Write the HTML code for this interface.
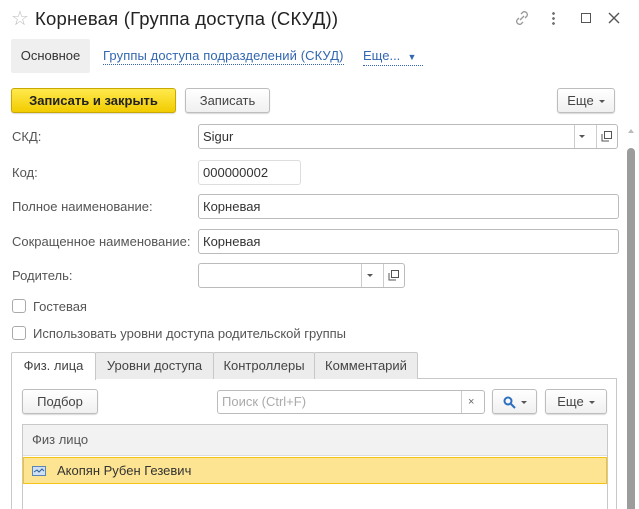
<!DOCTYPE html>
<html><head><meta charset="utf-8"><style>
*{box-sizing:border-box;margin:0;padding:0}
html,body{width:639px;height:509px;overflow:hidden}
body{background:#fff;font-family:"Liberation Sans",Arial,sans-serif;font-size:13px;color:#333;position:relative}
.a{position:absolute;white-space:nowrap}
.inp{position:absolute;border:1px solid #bbb;border-radius:3px;background:#fff;height:25px;padding-left:4px;line-height:23px;color:#333}
.btn{position:absolute;border:1px solid #bdbdbd;border-radius:3px;background:linear-gradient(#fff,#f0f0f0);height:25px;line-height:23px;text-align:center;box-shadow:0 1px 1px rgba(0,0,0,.15);color:#444}
.sep{position:absolute;top:0;bottom:0;width:1px;background:#ccc}
.tri{display:inline-block;width:0;height:0;border-left:3px solid transparent;border-right:3px solid transparent;border-top:3px solid #555;vertical-align:middle;margin-left:5px}
.cb{position:absolute;width:14px;height:14px;border:1px solid #aaa;border-radius:3px;background:#fff}
.lbl{position:absolute;color:#555;white-space:nowrap}
.tab{position:absolute;top:352px;height:27px;border:1px solid #c8c8c8;border-bottom:none;background:#ececec;line-height:25px;text-align:center;color:#444;border-radius:2px 2px 0 0}
</style></head><body>
<div class="a" style="left:11px;top:6px;font-size:20px;color:#bbb">☆</div>
<div class="a" style="left:35px;top:8px;font-size:18.5px;color:#222;letter-spacing:0.2px">Корневая (Группа доступа (СКУД))</div>
<svg class="a" style="left:513px;top:9px" width="18" height="18" viewBox="0 0 18 18" fill="none" stroke="#999" stroke-width="1.3"><path d="M8 5l2-2a3 3 0 014 4l-2 2M10 13l-2 2a3 3 0 01-4-4l2-2M7 11l4-4"/></svg>
<div class="a" style="left:552px;top:11px;width:3px;height:14px;background:radial-gradient(circle,#777 1.3px,transparent 1.5px) 0 0/3px 5px"></div>
<div class="a" style="left:581px;top:13px;width:10px;height:10px;border:1.5px solid #555"></div>
<svg class="a" style="left:608px;top:12px" width="12" height="12" stroke="#555" stroke-width="1.4"><path d="M1 1l10 10M11 1L1 11"/></svg>

<div class="a" style="left:11px;top:39px;width:79px;height:34px;background:#efefef;border-radius:2px;line-height:34px;text-align:center;color:#333">Основное</div>
<div class="a" style="left:103px;top:48px;color:#3367b0;border-bottom:1px dotted #3367b0;line-height:16px;letter-spacing:0.1px">Группы доступа подразделений (СКУД)</div>
<div class="a" style="left:363px;top:48px;color:#3367b0;border-bottom:1px dotted #3367b0;line-height:16px;width:60px">Еще...&nbsp;&nbsp;<span style="font-size:9px">▼</span></div>

<div class="btn" style="left:11px;top:88px;width:165px;background:linear-gradient(#ffe94d,#f2cc00);border-color:#c9a800;color:#222;font-weight:bold">Записать и закрыть</div>
<div class="btn" style="left:185px;top:88px;width:85px">Записать</div>
<div class="btn" style="left:557px;top:88px;width:58px">Еще<span class="tri"></span></div>

<div class="lbl" style="left:12px;top:129px">СКД:</div>
<div class="inp" style="left:198px;top:124px;width:420px">Sigur<div class="sep" style="left:375px"></div><span class="tri" style="position:absolute;left:380px;top:10px;margin:0"></span><div class="sep" style="left:397px"></div><svg style="position:absolute;left:402px;top:6px" width="11" height="11" fill="none" stroke="#555"><rect x="3.5" y="0.5" width="7" height="7"/><path d="M1 3v7h7"/></svg></div>
<div class="lbl" style="left:12px;top:165px">Код:</div>
<div class="inp" style="left:198px;top:160px;width:103px;border-color:#ddd">000000002</div>
<div class="lbl" style="left:12px;top:199px">Полное наименование:</div>
<div class="inp" style="left:198px;top:194px;width:421px">Корневая</div>
<div class="lbl" style="left:12px;top:234px">Сокращенное наименование:</div>
<div class="inp" style="left:198px;top:229px;width:421px">Корневая</div>
<div class="lbl" style="left:12px;top:268px">Родитель:</div>
<div class="inp" style="left:198px;top:263px;width:207px"><div class="sep" style="left:162px"></div><span class="tri" style="position:absolute;left:168px;top:10px;margin:0"></span><div class="sep" style="left:184px"></div><svg style="position:absolute;left:189px;top:6px" width="11" height="11" fill="none" stroke="#555"><rect x="3.5" y="0.5" width="7" height="7"/><path d="M1 3v7h7"/></svg></div>
<div class="cb" style="left:12px;top:299px"></div><div class="lbl" style="left:33px;top:299px">Гостевая</div>
<div class="cb" style="left:12px;top:326px"></div><div class="lbl" style="left:33px;top:326px">Использовать уровни доступа родительской группы</div>

<div class="a" style="left:11px;top:378px;width:606px;height:140px;border:1px solid #c8c8c8"></div>
<div class="tab" style="left:11px;width:85px;background:#fff;height:28px;z-index:2">Физ. лица</div>
<div class="tab" style="left:95px;width:119px">Уровни доступа</div>
<div class="tab" style="left:213px;width:102px">Контроллеры</div>
<div class="tab" style="left:314px;width:104px">Комментарий</div>

<div class="btn" style="left:22px;top:389px;width:76px">Подбор</div>
<div class="inp" style="left:217px;top:390px;width:268px;height:24px;line-height:22px;color:#aaa">Поиск (Ctrl+F)<div class="sep" style="left:243px"></div><span style="position:absolute;left:250px;color:#666;font-size:11px">×</span></div>
<div class="btn" style="left:492px;top:389px;width:45px"><svg width="13" height="13" style="vertical-align:middle" fill="none" stroke="#2c6fbf" stroke-width="2"><circle cx="5" cy="5" r="3.5"/><path d="M8 8l4 4"/></svg><span class="tri"></span></div>
<div class="btn" style="left:545px;top:389px;width:62px">Еще<span class="tri"></span></div>

<div class="a" style="left:22px;top:424px;width:586px;height:90px;border:1px solid #c8c8c8"></div>
<div class="a" style="left:23px;top:425px;width:584px;height:31px;background:#f2f2f2;border-bottom:1px solid #ddd;line-height:30px;padding-left:9px;color:#555">Физ лицо</div>
<div class="a" style="left:23px;top:457px;width:584px;height:27px;background:#fde492;border:1px solid #f4c315;line-height:25px;padding-left:33px;color:#333">Акопян Рубен Гезевич</div>
<svg class="a" style="left:32px;top:466px" width="14" height="10"><rect x="0.5" y="0.5" width="13" height="9" fill="#cfe0f2" stroke="#5a86b5"/><path d="M2 6l3-2 2 2 3-3 2 2" fill="none" stroke="#2c5e99"/></svg>

<div class="a" style="left:628px;top:129px;width:0;height:0;border-left:3px solid transparent;border-right:3px solid transparent;border-bottom:4px solid #bbb"></div>
<div class="a" style="left:627px;top:148px;width:8px;height:370px;background:#9c9c9c;border-radius:4px"></div>
</body></html>
